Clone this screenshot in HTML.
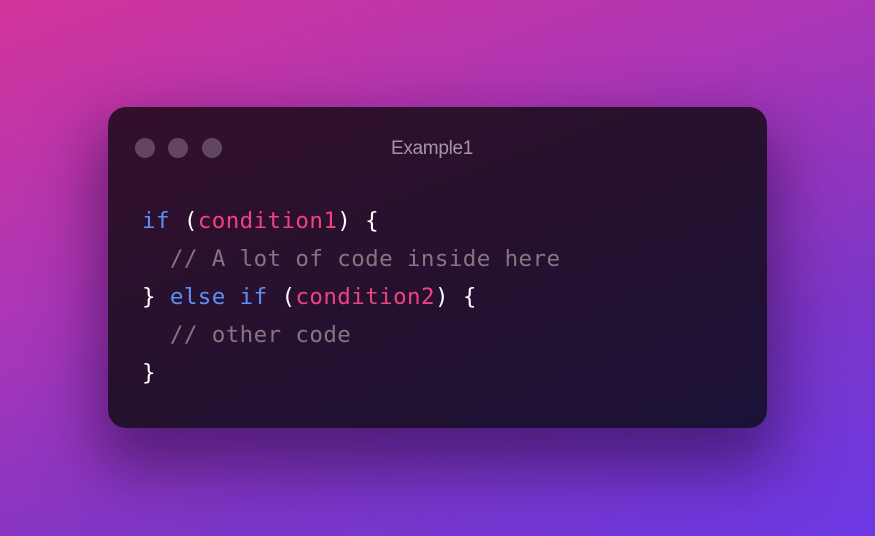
<!DOCTYPE html>
<html><head><style>
html,body{margin:0;padding:0}
body{width:875px;height:536px;overflow:hidden;position:relative;
background:linear-gradient(160deg,#d2349a 0%,#a836b8 40%,#7d36c6 70%,#6b38e4 100%);}
.card{position:absolute;left:108px;top:107px;width:659px;height:321px;border-radius:18px;
background:linear-gradient(160deg,#33102b 0%,#25112f 50%,#1b1137 100%);
box-shadow:0 30px 60px 10px rgba(40,10,60,0.55);}
.dot{position:absolute;top:31px;width:20px;height:20px;border-radius:50%;background:#624660}
.title{position:absolute;left:0;right:0;top:31px;text-align:center;margin-left:-11px;
font-family:"Liberation Sans",sans-serif;font-size:19px;color:#a594a6;letter-spacing:-0.3px}
pre{position:absolute;left:34px;top:95px;margin:0;font-family:"DejaVu Sans Mono","Liberation Mono",monospace;
font-size:22.5px;line-height:38px;color:#fff;letter-spacing:0.4px}
.k{color:#5f8ef5}.c{color:#f0427f}.m{color:#8a7380}
</style></head><body>
<div class="card">
<div class="dot" style="left:27px"></div>
<div class="dot" style="left:60px"></div>
<div class="dot" style="left:94px"></div>
<div class="title">Example1</div>
<pre><span class="k">if</span> (<span class="c">condition1</span>) {
  <span class="m">// A lot of code inside here</span>
} <span class="k">else</span> <span class="k">if</span> (<span class="c">condition2</span>) {
  <span class="m">// other code</span>
}</pre>
</div>
</body></html>
